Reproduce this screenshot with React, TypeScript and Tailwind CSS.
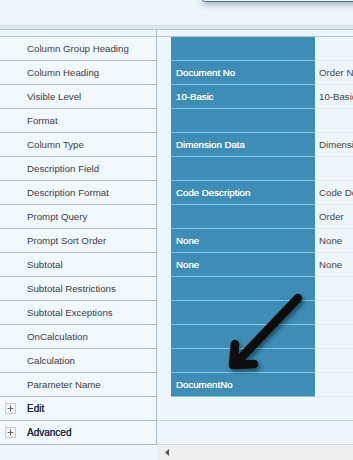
import React from "react";

type Row = { label: string; blue?: string; right?: string };

const rows: Row[] = [
  { label: "Column Group Heading" },
  { label: "Column Heading", blue: "Document No", right: "Order No" },
  { label: "Visible Level", blue: "10-Basic", right: "10-Basic" },
  { label: "Format" },
  { label: "Column Type", blue: "Dimension Data", right: "Dimension Data" },
  { label: "Description Field" },
  { label: "Description Format", blue: "Code Description", right: "Code Description" },
  { label: "Prompt Query", right: "Order" },
  { label: "Prompt Sort Order", blue: "None", right: "None" },
  { label: "Subtotal", blue: "None", right: "None" },
  { label: "Subtotal Restrictions" },
  { label: "Subtotal Exceptions" },
  { label: "OnCalculation" },
  { label: "Calculation" },
  { label: "Parameter Name", blue: "DocumentNo" },
];

function DataRow({ r }: { r: Row }) {
  return (
    <div className="flex h-[24px] text-[9.7px] leading-none">
      <div className="w-[157px] shrink-0 border-r border-b border-[#a9bdcc] bg-[#f1f8fe] pl-[27px] flex items-center text-[#3c3c3c] whitespace-nowrap">
        {r.label}
      </div>
      <div className="w-[14px] shrink-0" />
      <div className="w-[144px] shrink-0 bg-[#3d8db6] border-b border-[#86c3e5] pl-[5px] flex items-center text-white whitespace-nowrap [text-shadow:0_0_0.4px_#fff]">
        {r.blue ?? ""}
      </div>
      <div className="flex-1 min-w-0 border-b border-[#dde8f0] pl-[4px] flex items-center text-[#454545] whitespace-nowrap overflow-hidden">
        {r.right ?? ""}
      </div>
    </div>
  );
}

function GroupRow({ label }: { label: string }) {
  return (
    <div className="flex h-[24px] text-[10px] leading-none">
      <div className="w-[157px] shrink-0 border-r border-b border-[#a9bdcc] bg-[#f1f8fe] flex items-center">
        <div className="ml-[5px] w-[11px] h-[11px] border border-[#c9c9c9] bg-[#f6f6f6] flex items-center justify-center">
          <svg width="7" height="7" viewBox="0 0 7 7">
            <path d="M3.5 0.5v6M0.5 3.5h6" stroke="#6d6d6d" strokeWidth="1.2" />
          </svg>
        </div>
        <span className="ml-[11px] text-[#142a40] [text-shadow:0_0_0.5px_#142a40]">{label}</span>
      </div>
      <div className="flex-1 border-b border-[#c9d8e3]" />
    </div>
  );
}

export default function App() {
  return (
    <div className="relative w-[353px] h-[460px] overflow-hidden bg-[#eef6fd] font-['Liberation_Sans',Arial,sans-serif]">
      {/* dialog edge overlay at top right */}
      <div className="absolute left-[202px] top-[-12px] w-[170px] h-[14px] bg-[#eef6fd] border border-[#4f6f8d] rounded-[3px] shadow-[0_3px_6px_rgba(40,70,100,0.35)]" />

      <div className="h-[25px]" />
      <div className="h-[4px] bg-[#dce8f1] border-t border-[#cfdde8]" />
      <div className="flex h-[8px] border-t border-b border-[#b3c6d4]">
        <div className="w-[157px] border-r border-[#a9bdcc]" />
      </div>

      {rows.map((r) => (
        <DataRow key={r.label} r={r} />
      ))}
      <GroupRow label="Edit" />
      <GroupRow label="Advanced" />

      <div className="flex h-[15px]">
        <div className="w-[157px] shrink-0" />
        <div className="flex-1 bg-[#efefef] flex items-center pl-[8px]">
          <svg width="4" height="7" viewBox="0 0 4 7">
            <path d="M4 0L0 3.5L4 7Z" fill="#555" />
          </svg>
        </div>
      </div>

      {/* annotation arrow */}
      <svg
        className="absolute left-[220px] top-[285px]"
        width="100"
        height="100"
        viewBox="0 0 100 100"
        style={{ filter: "drop-shadow(2px 3px 2px rgba(0,0,0,0.45))" }}
      >
        <g stroke="#0d0d0d" strokeWidth="8.5" strokeLinecap="round" strokeLinejoin="round" fill="none">
          <path d="M78 13L16 78" />
          <path d="M15 59L13 80L34 79" />
        </g>
      </svg>
    </div>
  );
}
